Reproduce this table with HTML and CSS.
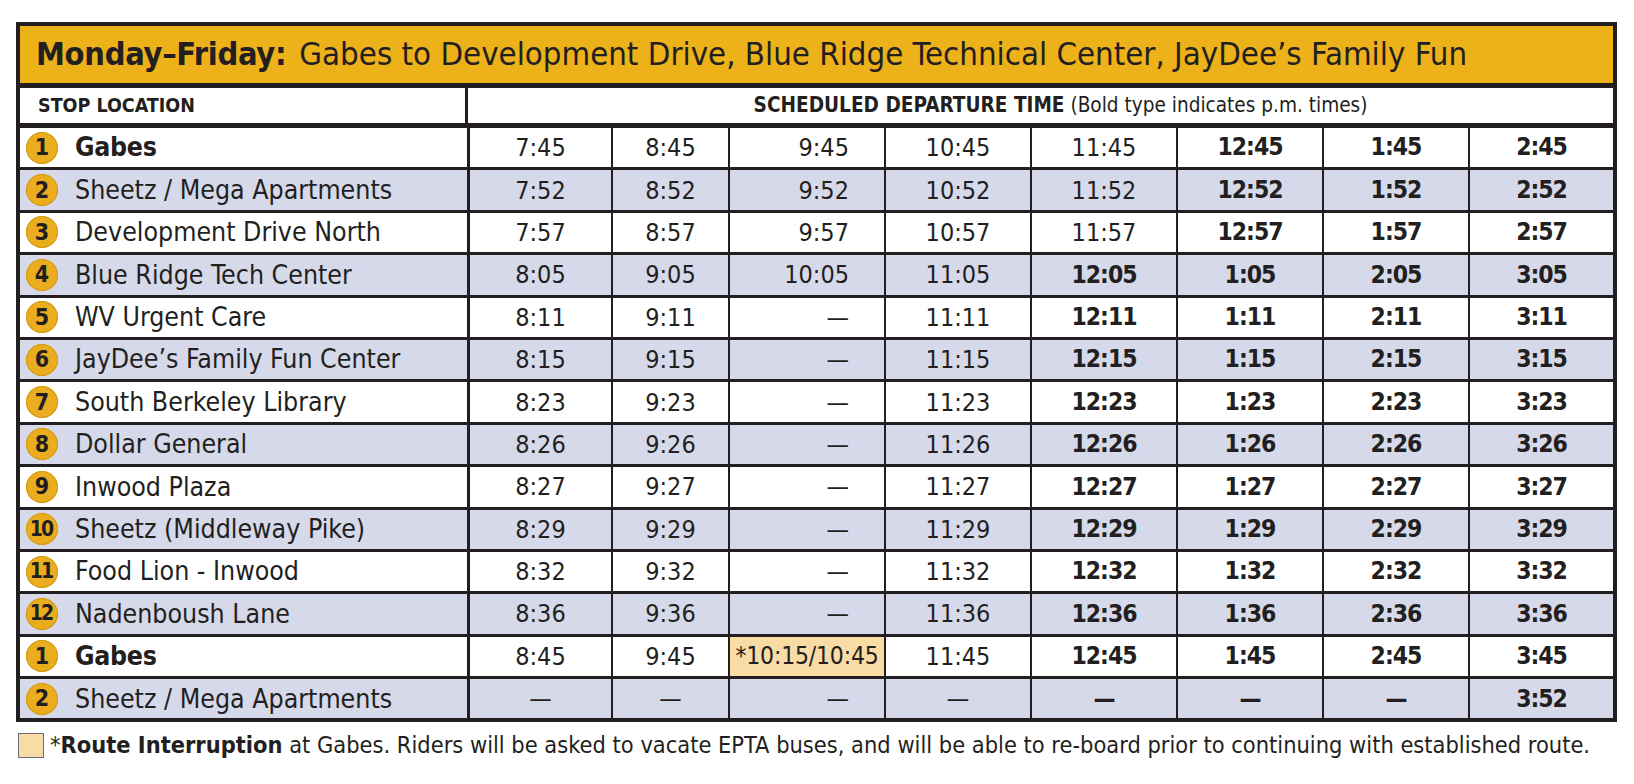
FILE: index.html
```html
<!DOCTYPE html>
<html lang="en">
<head>
<meta charset="utf-8">
<title>Monday–Friday Schedule</title>
<link rel="stylesheet" href="styles.css">
</head>
<body>
<div class="page">
  <table class="schedule">
    <colgroup>
      <col class="col-stop">
      <col class="col-a">
      <col class="col-b">
      <col class="col-c">
      <col class="col-d">
      <col class="col-d">
      <col class="col-d">
      <col class="col-d">
      <col class="col-e">
    </colgroup>
    <thead>
      <tr class="title-row">
        <th colspan="9"><span class="title-day">Monday–Friday:</span> <span class="title-route">Gabes to Development Drive, Blue Ridge Technical Center, JayDee’s Family Fun</span></th>
      </tr>
      <tr class="head-row">
        <th class="head-stop">STOP LOCATION</th>
        <th class="head-times" colspan="8"><b>SCHEDULED DEPARTURE TIME</b> (Bold type indicates p.m. times)</th>
      </tr>
    </thead>
    <tbody>
      <tr>
        <td class="stop"><div class="stop-in"><span class="num">1</span><span class="name strong">Gabes</span></div></td>
        <td>7:45</td><td>8:45</td><td class="c3">9:45</td><td>10:45</td><td>11:45</td><td class="pm">12:45</td><td class="pm">1:45</td><td class="pm">2:45</td>
      </tr>
      <tr class="alt">
        <td class="stop"><div class="stop-in"><span class="num">2</span><span class="name">Sheetz / Mega Apartments</span></div></td>
        <td>7:52</td><td>8:52</td><td class="c3">9:52</td><td>10:52</td><td>11:52</td><td class="pm">12:52</td><td class="pm">1:52</td><td class="pm">2:52</td>
      </tr>
      <tr>
        <td class="stop"><div class="stop-in"><span class="num">3</span><span class="name">Development Drive North</span></div></td>
        <td>7:57</td><td>8:57</td><td class="c3">9:57</td><td>10:57</td><td>11:57</td><td class="pm">12:57</td><td class="pm">1:57</td><td class="pm">2:57</td>
      </tr>
      <tr class="alt">
        <td class="stop"><div class="stop-in"><span class="num">4</span><span class="name">Blue Ridge Tech Center</span></div></td>
        <td>8:05</td><td>9:05</td><td class="c3">10:05</td><td>11:05</td><td class="pm">12:05</td><td class="pm">1:05</td><td class="pm">2:05</td><td class="pm">3:05</td>
      </tr>
      <tr>
        <td class="stop"><div class="stop-in"><span class="num">5</span><span class="name">WV Urgent Care</span></div></td>
        <td>8:11</td><td>9:11</td><td class="c3">—</td><td>11:11</td><td class="pm">12:11</td><td class="pm">1:11</td><td class="pm">2:11</td><td class="pm">3:11</td>
      </tr>
      <tr class="alt">
        <td class="stop"><div class="stop-in"><span class="num">6</span><span class="name">JayDee’s Family Fun Center</span></div></td>
        <td>8:15</td><td>9:15</td><td class="c3">—</td><td>11:15</td><td class="pm">12:15</td><td class="pm">1:15</td><td class="pm">2:15</td><td class="pm">3:15</td>
      </tr>
      <tr>
        <td class="stop"><div class="stop-in"><span class="num">7</span><span class="name">South Berkeley Library</span></div></td>
        <td>8:23</td><td>9:23</td><td class="c3">—</td><td>11:23</td><td class="pm">12:23</td><td class="pm">1:23</td><td class="pm">2:23</td><td class="pm">3:23</td>
      </tr>
      <tr class="alt">
        <td class="stop"><div class="stop-in"><span class="num">8</span><span class="name">Dollar General</span></div></td>
        <td>8:26</td><td>9:26</td><td class="c3">—</td><td>11:26</td><td class="pm">12:26</td><td class="pm">1:26</td><td class="pm">2:26</td><td class="pm">3:26</td>
      </tr>
      <tr>
        <td class="stop"><div class="stop-in"><span class="num">9</span><span class="name">Inwood Plaza</span></div></td>
        <td>8:27</td><td>9:27</td><td class="c3">—</td><td>11:27</td><td class="pm">12:27</td><td class="pm">1:27</td><td class="pm">2:27</td><td class="pm">3:27</td>
      </tr>
      <tr class="alt">
        <td class="stop"><div class="stop-in"><span class="num two">10</span><span class="name">Sheetz (Middleway Pike)</span></div></td>
        <td>8:29</td><td>9:29</td><td class="c3">—</td><td>11:29</td><td class="pm">12:29</td><td class="pm">1:29</td><td class="pm">2:29</td><td class="pm">3:29</td>
      </tr>
      <tr>
        <td class="stop"><div class="stop-in"><span class="num two">11</span><span class="name">Food Lion - Inwood</span></div></td>
        <td>8:32</td><td>9:32</td><td class="c3">—</td><td>11:32</td><td class="pm">12:32</td><td class="pm">1:32</td><td class="pm">2:32</td><td class="pm">3:32</td>
      </tr>
      <tr class="alt">
        <td class="stop"><div class="stop-in"><span class="num two">12</span><span class="name">Nadenboush Lane</span></div></td>
        <td>8:36</td><td>9:36</td><td class="c3">—</td><td>11:36</td><td class="pm">12:36</td><td class="pm">1:36</td><td class="pm">2:36</td><td class="pm">3:36</td>
      </tr>
      <tr>
        <td class="stop"><div class="stop-in"><span class="num">1</span><span class="name strong">Gabes</span></div></td>
        <td>8:45</td><td>9:45</td><td class="note">*10:15/10:45</td><td>11:45</td><td class="pm">12:45</td><td class="pm">1:45</td><td class="pm">2:45</td><td class="pm">3:45</td>
      </tr>
      <tr class="alt">
        <td class="stop"><div class="stop-in"><span class="num">2</span><span class="name">Sheetz / Mega Apartments</span></div></td>
        <td>—</td><td>—</td><td class="c3">—</td><td>—</td><td class="pm">—</td><td class="pm">—</td><td class="pm">—</td><td class="pm">3:52</td>
      </tr>
    </tbody>
  </table>
  <div class="footnote">
    <span class="swatch"></span>
    <p class="footnote-text">*<b>Route Interruption</b> at Gabes. Riders will be asked to vacate EPTA buses, and will be able to re-board prior to continuing with established route.</p>
  </div>
</div>
</body>
</html>
```

FILE: styles.css
```css
html, body {
  margin: 0;
  padding: 0;
  background: #ffffff;
}

body {
  font-family: "DejaVu Sans Condensed", "Liberation Sans", sans-serif;
  color: #231f20;
}

.page {
  padding: 22px 17px 0 16px;
}

.schedule {
  width: 1601px;
  table-layout: fixed;
  border-collapse: separate;
  border-spacing: 0;
  border: 4px solid #231f20;
}

.col-stop { width: 448px; }
.col-a { width: 143px; }
.col-b { width: 117px; }
.col-c { width: 156px; }
.col-d { width: 146px; }
.col-e { width: 145px; }

.title-row th {
  background: #edb11a;
  height: 57px;
  padding: 0 0 0 16px;
  text-align: left;
  border-bottom: 5px solid #231f20;
  white-space: nowrap;
  line-height: 1;
}

.title-day {
  font-weight: 700;
  font-size: 32.3px;
  letter-spacing: -0.3px;
}

.title-route {
  font-weight: 400;
  font-size: 32.7px;
  margin-left: 8px;
}

.head-row th {
  height: 35px;
  padding: 0;
  background: #ffffff;
  border-bottom: 5px solid #231f20;
  font-size: 20.6px;
  font-weight: 400;
  line-height: 1;
}

.head-stop {
  text-align: left;
  padding-left: 18px !important;
  font-weight: 700 !important;
  font-size: 19.5px !important;
  border-right: 3px solid #231f20;
}

.head-times {
  text-align: center;
  padding-left: 40px !important;
}

.head-times b {
  font-weight: 700;
}

tbody td {
  height: 39.4px;
  padding: 0;
  text-align: center;
  vertical-align: middle;
  font-size: 25px;
  font-weight: 400;
  line-height: 1;
  border-left: 2px solid #231f20;
  border-top: 3px solid #231f20;
  background: #ffffff;
  white-space: nowrap;
}

tbody tr:first-child td {
  border-top: 0;
}

tbody tr.alt td {
  background: #d5d9e9;
}

tbody td.stop {
  border-left: 0;
  border-right: 1px solid #231f20;
  text-align: left;
}

tbody td.c3 {
  text-align: right;
  padding-right: 35px;
}

tbody td.note {
  background: #f9dba6;
  text-align: center;
  font-size: 24.5px;
  letter-spacing: -0.2px;
}

tbody td.pm {
  font-weight: 700;
  font-size: 24.5px;
  letter-spacing: -1px;
}

.stop-in {
  display: flex;
  align-items: center;
  padding-left: 6px;
}

.num {
  flex: none;
  width: 32px;
  height: 32px;
  border-radius: 50%;
  background: #e9ad1f;
  box-shadow: inset 0 0 0 1px #d39a12;
  display: flex;
  align-items: center;
  justify-content: center;
  font-size: 23px;
  font-weight: 700;
  line-height: 1;
  color: #231f20;
}

.num.two {
  font-size: 21px;
  letter-spacing: -2px;
  text-indent: -2px;
}

.name {
  margin-left: 17px;
  font-size: 26.5px;
}

.name.strong {
  font-weight: 700;
  letter-spacing: -0.3px;
}

.footnote {
  display: flex;
  align-items: center;
  margin-top: 11px;
  padding-left: 2px;
}

.swatch {
  flex: none;
  width: 24px;
  height: 23px;
  background: #f9dba6;
  border: 1px solid #6b6a78;
}

.footnote-text {
  margin: 0 0 0 6px;
  font-size: 23.4px;
  line-height: 1;
  white-space: nowrap;
}

.footnote-text b {
  font-weight: 700;
}
```
